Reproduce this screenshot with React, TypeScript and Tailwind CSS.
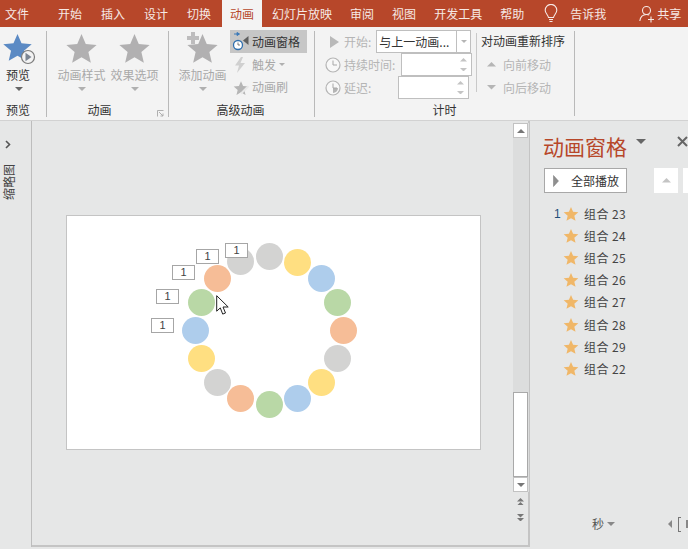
import React from "react";

const STAR = "M12 1.5l3.1 7.2 7.9.7-6 5.2 1.8 7.7L12 18.3 5.2 22.3 7 14.6 1 9.4l7.9-.7z";

function Star({ size, color, className = "" }: { size: number; color: string; className?: string }) {
  return (
    <svg width={size} height={size} viewBox="0 0 24 24" className={className}>
      <path d={STAR} fill={color} />
    </svg>
  );
}

function Caret({ color = "#8a8a8a", up = false, w = 8 }: { color?: string; up?: boolean; w?: number }) {
  return (
    <svg width={w} height={w / 2} viewBox="0 0 8 4" className="block shrink-0">
      <path d={up ? "M4 0l4 4H0z" : "M0 0h8L4 4z"} fill={color} />
    </svg>
  );
}

function Clock({ fill = false }: { fill?: boolean }) {
  return (
    <svg width="16" height="16" viewBox="0 0 16 16" className="shrink-0">
      <circle cx="8" cy="8" r="7" fill="#f8f8f8" stroke="#b5b5b5" strokeWidth="1.2" />
      {fill ? <path d="M8 8V3A5 5 0 0 1 13 8z" fill="#b5b5b5" transform="rotate(90 8 8)" /> : null}
      <path d="M8 3.5V8H12" fill="none" stroke="#a8a8a8" strokeWidth="1" />
    </svg>
  );
}

const tabs: [string, string][] = [
  ["开始", "ml-[29px]"],
  ["插入", "ml-[19px]"],
  ["设计", "ml-[19px]"],
  ["切换", "ml-[19px]"],
];
const tabsRight: [string, string][] = [
  ["审阅", "ml-[18px]"],
  ["视图", "ml-[18px]"],
  ["开发工具", "ml-[18px]"],
  ["帮助", "ml-[18px]"],
];

function TabBar() {
  return (
    <div className="flex h-[27px] items-center bg-[#b7472a] pl-[5px] text-[12px] text-[#f6e9e5]">
      <span>文件</span>
      {tabs.map(([t, c]) => (
        <span key={t} className={c}>{t}</span>
      ))}
      <span className="ml-[11px] flex h-[27px] w-[40px] items-center justify-center bg-[#f3f3f3] text-[#b7472a]">动画</span>
      <span className="ml-[10px]">幻灯片放映</span>
      {tabsRight.map(([t, c]) => (
        <span key={t} className={c}>{t}</span>
      ))}
      <svg width="14" height="19" viewBox="0 0 14 19" className="ml-[20px] shrink-0">
        <path d="M4.5 13.5C4 10.5 1.2 9.5 1.2 6.2a5.8 5.8 0 0 1 11.6 0c0 3.300-2.800 4.300-3.300 7.300z M5 15.500h4 M5.500 17.500h3" fill="none" stroke="#f6e9e5" strokeWidth="1.100" />
      </svg>
      <span className="ml-[12px]">告诉我</span>
      <svg width="16" height="18" viewBox="0 0 16 18" className="ml-[33px] shrink-0">
        <circle cx="7.500" cy="5.500" r="4" fill="none" stroke="#f6e9e5" strokeWidth="1.100" />
        <path d="M0.800 16c.5-4 3-6.500 6.700-6.500 1 0 2 .2 2.800.6 M12 11.500v6 M9 14.500h6" fill="none" stroke="#f6e9e5" strokeWidth="1.100" />
      </svg>
      <span className="ml-[2px]">共享</span>
    </div>
  );
}

function GroupLabel({ children }: { children: React.ReactNode }) {
  return <div className="mt-auto flex h-[17px] items-start justify-center text-[12px] leading-[16px] text-[#333]">{children}</div>;
}

function BigButton({ label, color = "#a9a9a9", className = "" }: { label: string; color?: string; className?: string }) {
  return (
    <div className={`flex w-[53px] flex-col items-center ${className}`}>
      <Star size={33} color="#b1b0b1" className="mt-[5px]" />
      <span className="mt-[2px] text-[12px] leading-[16px]" style={{ color }}>{label}</span>
      <div className="mt-[4px]"><Caret color="#b0b0b0" /></div>
    </div>
  );
}

function Spin() {
  return (
    <div className="ml-auto mr-[4px] flex flex-col gap-[6px]">
      <Caret color="#c4c4c4" up w={7} />
      <Caret color="#c4c4c4" w={7} />
    </div>
  );
}

function Ribbon() {
  return (
    <div className="flex h-[94px] border-b border-[#d2d2d2] bg-[#f3f3f3]">
      {/* 预览 */}
      <div className="flex w-[46px] shrink-0 flex-col pb-[1px]">
        <div className="relative ml-[2px] mt-[5px] h-[33px] w-[33px]">
          <Star size={31} color="#5b8ac4" />
          <svg width="16" height="16" viewBox="0 0 16 16" className="absolute left-[18px] top-[17px]">
            <circle cx="8" cy="8" r="6.500" fill="#f3f3f3" stroke="#7b7b7b" strokeWidth="1.200" />
            <path d="M5.500 3.800l6 4.200-6 4.200z" fill="#7b8593" />
          </svg>
        </div>
        <div className="mt-[2px] w-[36px] text-center text-[12px] leading-[16px] text-[#333]">预览</div>
        <div className="ml-[15px] mt-[4px]"><Caret color="#666" /></div>
        <div className="w-[36px] mt-auto"><GroupLabel>预览</GroupLabel></div>
      </div>
      <div className="my-[4px] mb-[3px] w-[1px] shrink-0 bg-[#b9b9b9]" />
      {/* 动画 */}
      <div className="relative flex w-[121px] shrink-0 flex-col pb-[1px]">
        <div className="flex pl-[8px]">
          <BigButton label="动画样式" />
          <BigButton label="效果选项" />
        </div>
        <div className="mt-auto w-[105px]"><GroupLabel>动画</GroupLabel></div>
        <svg width="7" height="7" viewBox="0 0 7 7" className="absolute bottom-[3px] right-[4px]">
          <path d="M.5 6.500V.5h6M2 2l4 4M6 3.500V6H3.500" fill="none" stroke="#a8a8a8" strokeWidth="0.900" />
        </svg>
      </div>
      <div className="my-[4px] mb-[3px] w-[1px] shrink-0 bg-[#b9b9b9]" />
      {/* 高级动画 */}
      <div className="flex w-[145px] shrink-0 flex-col pb-[1px]">
        <div className="flex">
          <div className="relative ml-[7px]">
            <BigButton label="添加动画" />
            <svg width="12" height="12" viewBox="0 0 12 12" className="absolute left-[11px] top-[5px]">
              <path d="M4 0h4v4h4v4H8v4H4V8H0V4h4z" fill="#bdbcbd" />
            </svg>
          </div>
          <div className="ml-[1px] mt-[3px] flex w-[77px] flex-col text-[12px]">
            <div className="flex h-[23px] items-center bg-[#c6c6c6] pl-[1px] text-[#333]">
              <svg width="19" height="20" viewBox="0 0 19 20" className="shrink-0">
                <path d="M3 2h5M6 .5L8.500 2 6 3.500z" fill="#3d7ab8" stroke="#3d7ab8" strokeWidth="1" />
                <circle cx="7" cy="13" r="4.500" fill="#fff" stroke="#2f6fae" strokeWidth="1.300" />
                <path d="M7 10.500V13h2" fill="none" stroke="#555" strokeWidth="0.800" />
                <path d="M17.500 4v9l-5.500-4.500z" fill="#5f5f5f" />
              </svg>
              <span className="ml-[2px]">动画窗格</span>
            </div>
            <div className="flex h-[23px] items-center pl-[3px] text-[#a8a8a8]">
              <svg width="14" height="16" viewBox="0 0 14 16" className="shrink-0">
                <path d="M8 0L2 8.500h4L4 16l8-10H7.500L10 0z" fill="#d0d0d0" />
              </svg>
              <span className="ml-[5px]">触发</span>
              <div className="ml-[3px]"><Caret color="#b0b0b0" w={6} /></div>
            </div>
            <div className="flex h-[22px] items-center pl-[3px] text-[#a8a8a8]">
              <svg width="16" height="15" viewBox="0 0 24 22" className="shrink-0">
                <path d={STAR} fill="#b5b5b5" />
                <path d="M12 20L23 9" stroke="#e8e8e8" strokeWidth="3" />
              </svg>
              <span className="ml-[3px]">动画刷</span>
            </div>
          </div>
        </div>
        <GroupLabel><span className="mr-[2px]">高级动画</span></GroupLabel>
      </div>
      <div className="my-[4px] mb-[3px] w-[1px] shrink-0 bg-[#b9b9b9]" />
      {/* 计时 */}
      <div className="flex w-[259px] shrink-0 flex-col pb-[1px]">
        <div className="flex">
          <div className="flex w-[160px] shrink-0 flex-col pt-[3px] text-[12px] text-[#b5b5b5]">
            <div className="flex h-[23px] items-center">
              <svg width="9" height="12" viewBox="0 0 9 12" className="ml-[15px] mr-[5px] shrink-0">
                <path d="M0 0l9 6-9 6z" fill="#b9b9b9" />
              </svg>
              <span>开始:</span>
              <div className="ml-[5px] flex h-[23px] w-[95px] items-center border border-[#bfbfbf] bg-white pl-[2px] text-[#333]">
                <span className="w-[77px] whitespace-nowrap">与上一动画...</span>
                <div className="flex h-full flex-1 items-center justify-center border-l border-[#bfbfbf]"><Caret color="#b5b5b5" w={6} /></div>
              </div>
            </div>
            <div className="flex h-[23px] items-center">
              <div className="ml-[10px] mr-[3px]"><Clock /></div>
              <span>持续时间:</span>
              <div className="ml-[6px] flex h-[23px] w-[71px] items-center border border-[#bfbfbf] bg-white"><Spin /></div>
            </div>
            <div className="flex h-[23px] items-center">
              <div className="ml-[10px] mr-[3px]"><Clock fill /></div>
              <span>延迟:</span>
              <div className="ml-[27px] flex h-[23px] w-[71px] items-center border border-[#bfbfbf] bg-white"><Spin /></div>
            </div>
          </div>
        </div>
        <div className="mt-auto w-[157px]"><GroupLabel><span className="ml-[102px]">计时</span></GroupLabel></div>
      </div>
    </div>
  );
}

function Reorder() {
  return (
    <div className="absolute left-[476px] top-[33px] flex h-[59px] border-l border-[#c9c9c9] pl-[4px]">
      <div className="flex flex-col text-[12px] text-[#b5b5b5]">
        <span className="h-[20px] shrink-0 leading-[16px] text-[#333]">对动画重新排序</span>
        <div className="flex h-[23px] shrink-0 items-center pl-[6px]"><Caret color="#b5b5b5" up w={9} /><span className="ml-[7px]">向前移动</span></div>
        <div className="flex h-[23px] shrink-0 items-center pl-[6px]"><Caret color="#b5b5b5" w={9} /><span className="ml-[7px]">向后移动</span></div>
      </div>
    </div>
  );
}

const circles: [number, number, string][] = [
  [240, 261, "#d3d3d2"], [269, 256, "#d3d3d2"], [297, 262, "#ffdf81"], [321, 278, "#aecdec"],
  [337, 302, "#b9d8a6"], [343, 330, "#f6bd97"], [337, 358, "#d3d3d2"], [321, 382, "#ffdf81"],
  [297, 398, "#aecdec"], [269, 404, "#b9d8a6"], [240, 398, "#f6bd97"], [217, 382, "#d3d3d2"],
  [201, 358, "#ffdf81"], [195, 330, "#aecdec"], [201, 302, "#b9d8a6"], [217, 278, "#f6bd97"],
];
const labels: [number, number][] = [[225, 243], [196, 249], [172, 265], [156, 289], [151, 318]];

function Slide() {
  const ox = 67;
  const oy = 216;
  return (
    <div className="relative ml-[34px] mt-[94px] h-[235px] w-[415px] border border-[#c4c4c4] bg-white">
      {circles.map(([x, y, c], i) => (
        <div key={i} className="absolute h-[27px] w-[27px] rounded-full" style={{ left: x - ox - 13, top: y - oy - 13, background: c }} />
      ))}
      {labels.map(([x, y], i) => (
        <div key={i} className="absolute flex h-[15px] w-[23px] items-center justify-center border border-[#a6a6a6] bg-white text-[11px] leading-none text-[#444] [font-family:'Liberation_Sans',sans-serif]" style={{ left: x - ox, top: y - oy }}>1</div>
      ))}
      <svg width="14" height="21" viewBox="0 0 14 21" className="absolute" style={{ left: 216 - ox, top: 295 - oy }}>
        <path d="M.7.7v15.500l3.600-3.300 2.400 6.200 2.800-1.100-2.500-6h5.200z" fill="#fff" stroke="#222" strokeWidth="1" />
      </svg>
    </div>
  );
}

function Scrollbar() {
  return (
    <div className="flex w-[16px] shrink-0 flex-col items-stretch">
      <div className="mt-[2px] flex h-[369px] flex-col bg-[#dcdddd]">
        <div className="flex h-[15px] w-[15px] items-center justify-center border border-[#c2c2c2] bg-white"><Caret color="#777" up /></div>
        <div className="flex-1" />
        <div className="h-[85px] w-[15px] border border-[#a9a9a9] bg-white" />
        <div className="flex h-[15px] w-[15px] items-center justify-center border border-[#c2c2c2] bg-white"><Caret color="#777" /></div>
      </div>
      <div className="mt-[6px] flex w-[15px] flex-col items-center">
        <Caret color="#777" up w={7} />
        <Caret color="#777" up w={7} />
      </div>
      <div className="mt-[9px] flex w-[15px] flex-col items-center">
        <Caret color="#777" w={7} />
        <Caret color="#777" w={7} />
      </div>
    </div>
  );
}

const items = ["组合 23", "组合 24", "组合 25", "组合 26", "组合 27", "组合 28", "组合 29", "组合 22"];

function Pane() {
  return (
    <div className="flex min-w-0 flex-1 flex-col overflow-hidden pl-[13px]">
      <div className="mt-[10px] flex h-[30px] w-[160px] items-center">
        <span className="shrink-0 whitespace-nowrap text-[21px] leading-[30px] text-[#b7472a]">动画窗格</span>
        <div className="ml-[9px] mt-[-10px]"><Caret color="#666" w={10} /></div>
        <svg width="11" height="11" viewBox="0 0 11 11" className="ml-[31px] mt-[-10px] shrink-0">
          <path d="M1 1l9 9M10 1l-9 9" stroke="#666" strokeWidth="2" />
        </svg>
      </div>
      <div className="mt-[7px] flex w-[170px] shrink-0">
        <div className="ml-[1px] flex h-[25px] w-[83px] shrink-0 items-center border border-[#a8a8a8] bg-white text-[12px] text-[#333]">
          <svg width="6" height="12" viewBox="0 0 6 12" className="ml-[8px] shrink-0">
            <path d="M.5.5l5 5.500-5 5.500z" fill="#8f8f8f" stroke="#777" strokeWidth="0.500" />
          </svg>
          <span className="ml-[12px]">全部播放</span>
        </div>
        <div className="ml-[27px] flex h-[25px] w-[24px] shrink-0 items-center justify-center bg-white"><Caret color="#c4c4c4" up w={9} /></div>
        <div className="ml-[5px] h-[25px] w-[24px] shrink-0 bg-white" />
      </div>
      <div className="mt-[10px] flex flex-col text-[12px] text-[#444]">
        {items.map((t, i) => (
          <div key={t} className="flex h-[22.100px] items-center">
            <span className="ml-[11px] w-[9px] text-[#1f4e79] [font-family:'Liberation_Sans',sans-serif]">{i === 0 ? "1" : ""}</span>
            <Star size={16} color="#f0b768" />
            <span className="ml-[5px] whitespace-nowrap tracking-[0.4px]">{t}</span>
          </div>
        ))}
      </div>
      <div className="mb-[15px] ml-[49px] mt-auto flex h-[20px] w-[150px] shrink-0 items-center text-[12px] text-[#555]">
        <span>秒</span>
        <div className="ml-[3px]"><Caret color="#888" /></div>
        <div className="ml-[53px]"><svg width="4" height="8" viewBox="0 0 4 8" className="block"><path d="M4 0v8L0 4z" fill="#888" /></svg></div>
        <div className="ml-[6px] h-[15px] w-[3px] border-y border-l border-[#777]" />
        <div className="ml-[5px] h-[8px] w-[2px] bg-[#888]" />
      </div>
    </div>
  );
}

export default function App() {
  return (
    <div className="relative h-[549px] w-[688px] overflow-hidden bg-[#e6e7e7] [font-family:'Noto_Sans_CJK_SC','Liberation_Sans',sans-serif]">
      <TabBar />
      <Ribbon />
      <Reorder />
      <div className="absolute left-[574px] top-[31px] h-[85px] w-[1px] bg-[#b9b9b9]" />
      <div className="flex h-[428px]">
        <div className="flex h-[426px] w-[32px] shrink-0 flex-col items-start border-r border-[#bdbdbd]">
          <svg width="6" height="9" viewBox="0 0 6 9" className="ml-[5px] mt-[19px] shrink-0">
            <path d="M1 1l3.500 3.500L1 8" fill="none" stroke="#555" strokeWidth="1.600" />
          </svg>
          <span className="ml-[3px] mt-[15px] text-[12px] leading-[12px] text-[#444] [writing-mode:vertical-rl] [text-orientation:sideways] rotate-180">缩略图</span>
        </div>
        <div className="flex h-[426px] w-[498px] shrink-0 border-b-2 border-r-2 border-[#c4c4c4]">
          <div className="w-[481px] shrink-0"><Slide /></div>
          <Scrollbar />
        </div>
        <Pane />
      </div>
    </div>
  );
}
